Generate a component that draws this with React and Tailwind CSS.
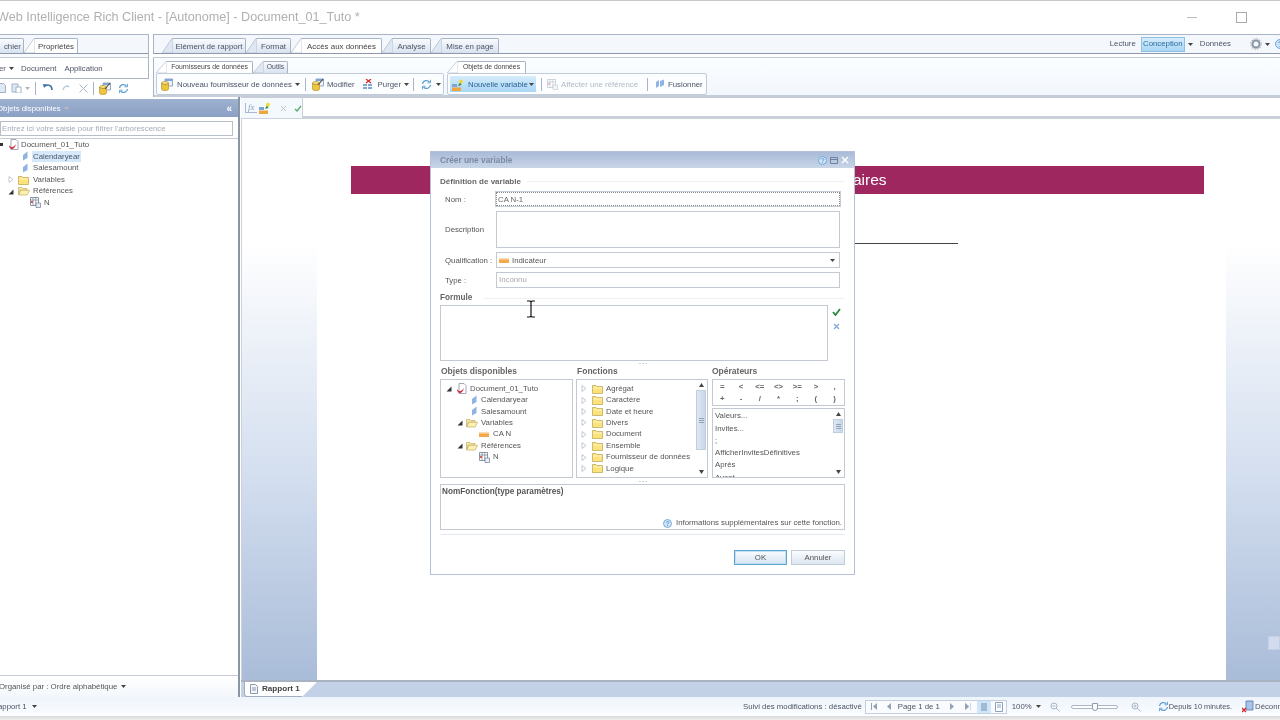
import React from 'react';

const Caret = ({ className = '' }) => (
  <svg width="5" height="3" viewBox="0 0 5 3" className={`shrink-0 ${className}`}><path d="M0 0H5L2.5 3z" fill="#444" /></svg>
);

const Sep = ({ className = '' }) => <span className={`w-px h-[13px] bg-[#a9b4c4] shrink-0 ${className}`} />;

const FolderClosed = ({ className = '' }) => (
  <svg width="11" height="10" viewBox="0 0 11 10" className={`shrink-0 ${className}`}>
    <path d="M.5 1.500h3.500l1 1h5.500v7h-10z" fill="#fbe27a" stroke="#b9a24e" strokeWidth=".7" />
    <path d="M1 3.500h9v1H1z" fill="#fff6c4" />
  </svg>
);

const FolderOpen = ({ className = '' }) => (
  <svg width="12" height="10" viewBox="0 0 12 10" className={`shrink-0 ${className}`}>
    <path d="M.5 1.500h3.500l1 1h4v2h-7l-1.500 4z" fill="#f3e3a6" stroke="#b9a24e" strokeWidth=".6" />
    <path d="M.8 9l2-4.800h8.700l-2.300 4.800z" fill="#fdf0b5" stroke="#b9a24e" strokeWidth=".6" />
  </svg>
);

const Leaf = ({ className = '' }) => (
  <svg width="6" height="10" viewBox="0 0 6 10" className={`shrink-0 ${className}`}><path d="M1 9.500V4L5.500.5v6.500z" fill="#8fb4e4" /></svg>
);

const Measure = ({ className = '' }) => (
  <svg width="10" height="5" viewBox="0 0 10 5" className={`shrink-0 ${className}`}>
    <path d="M0 1.500h10V5H0z" fill="#f4a94a" />
    <path d="M1 0v2M3 0v2M5 0v2M7 0v2M9 0v2" stroke="#f4a94a" strokeWidth=".8" />
  </svg>
);

const DocIcon = ({ className = '' }) => (
  <svg width="11" height="11" viewBox="0 0 11 11" className={`shrink-0 ${className}`}>
    <path d="M3 .5h5l2 2v8H3z" fill="#fff" stroke="#8d93a8" strokeWidth=".8" />
    <path d="M1 6c2 3 4 3 7-1-1 4-3 5-4 5-2 0-3-2-3-4z" fill="#cf2b3f" />
  </svg>
);

const RefIcon = ({ className = '', faded }) => (
  <svg width="11" height="11" viewBox="0 0 11 11" className={`shrink-0 ${className} ${faded ? 'opacity-40' : ''}`}>
    <path d="M.5.500h8v8h-8z" fill="#fff" stroke="#5c6b86" strokeWidth=".7" />
    <path d="M.5 3h8M3 .5v8M5.800.5v8" stroke="#5c6b86" strokeWidth=".6" />
    <path d="M1 4h2v2H1z" fill="#d65a5a" />
    <path d="M6 6h4.500v4.500H6z" fill="#e8edf5" stroke="#5c6b86" strokeWidth=".6" />
  </svg>
);

const Triangle = ({ open, className = '' }) => (
  <svg width="6" height="7" viewBox="0 0 6 7" className={`shrink-0 ${className}`}>
    {open ? <path d="M5.500 1.500v5h-5z" fill="#333" /> : <path d="M1 .5l4 3-4 3z" fill="#fff" stroke="#aab2bf" strokeWidth=".7" />}
  </svg>
);

// yellow cylinder with a small window, pencil stroke for the "edit" variant
const Cube = ({ className = '', edit }) => (
  <svg width="12" height="13" viewBox="0 0 12 13" className={`shrink-0 ${className}`}>
    <path d="M4 1h7.500v7H4z" fill="#eef3fa" stroke="#6f86a8" strokeWidth=".7" />
    <path d="M4 1h7.500v2H4z" fill="#7ea6d8" />
    <ellipse cx="4" cy="5" rx="3.500" ry="1.500" fill="#f8e27a" stroke="#a98a25" strokeWidth=".6" />
    <path d="M.5 5v6c0 2 7 2 7 0V5c0 2-7 2-7 0z" fill="#eec53c" stroke="#a98a25" strokeWidth=".6" />
    {edit && <path d="M6 7l5-6" stroke="#5a4a30" strokeWidth="1.100" />}
  </svg>
);

const Cycle = ({ className = '' }) => (
  <svg width="11" height="11" viewBox="0 0 11 11" className={`shrink-0 ${className}`} fill="none" stroke="#5f9fd0" strokeWidth="1.300">
    <path d="M1.500 5a4 4 0 0 1 7-2M9.500 6a4 4 0 0 1-7 2" />
    <path d="M9.500 .8v3h-3M1.500 10.200v-3h3" strokeWidth=".9" />
  </svg>
);

const NewVar = ({ className = '' }) => (
  <svg width="12" height="12" viewBox="0 0 12 12" className={`shrink-0 ${className}`}>
    <path d="M0 8.500h9V12H0z" fill="#eda53d" />
    <path d="M0 5h5v3H0z" fill="#7fa4cf" />
    <path d="M6 7l2-4 1.500 3z" fill="#2f8f3c" />
    <path d="M9 0l.8 1.600 1.700.2-1.200 1.200.3 1.700L9 3.900l-1.600.8.300-1.700-1.200-1.200 1.700-.2z" fill="#f6d728" />
  </svg>
);

const Help = ({ className = '' }) => (
  <svg width="9" height="9" viewBox="0 0 9 9" className={`shrink-0 ${className}`}>
    <circle cx="4.500" cy="4.500" r="4" fill="#cfe4f7" stroke="#5b9bd5" strokeWidth=".8" />
    <path d="M3.200 3.500c.3-1.300 2.600-1.200 2.600.1 0 .9-1.300.9-1.300 1.800M4.500 6.300v.8" stroke="#3c7fc0" strokeWidth=".8" fill="none" />
  </svg>
);

const Tab = ({ label, active, small, bodyClass = '' }) => (
  <div className={`flex items-stretch shrink-0 ${small ? 'h-[12px]' : 'h-[15px]'}`}>
    <svg width="11" height="100%" viewBox="0 0 11 16" preserveAspectRatio="none" className="shrink-0">
      <path d="M0 16L10 .5h1V16z" fill={active ? '#ffffff' : '#dfe7f3'} stroke="#a8b4c6" strokeWidth=".7" />
    </svg>
    <div className={`border-t border-r border-[#a8b4c6] rounded-tr-[2px] flex items-center justify-center whitespace-nowrap ${active ? 'bg-white text-[#444]' : 'bg-gradient-to-b from-[#f9fbfe] to-[#d8e2f0] text-[#4c5564]'} ${small ? 'text-[6.800px]' : 'text-[7.900px] pt-[1px]'} ${bodyClass}`}>
      <span>{label}</span>
    </div>
  </div>
);

const Row = ({ children, className = '' }) => <div className={`h-[11.4px] flex items-center whitespace-nowrap ${className}`}>{children}</div>;

const ScrollBar = ({ className = '', thumbClass = '' }) => (
  <div className={`w-[12px] flex flex-col items-center shrink-0 ${className}`}>
    <svg width="5" height="4" viewBox="0 0 5 4" className="mt-[3px]"><path d="M0 4h5L2.500 0z" fill="#444" /></svg>
    <div className={`w-[10px] mt-[3px] bg-gradient-to-r from-[#dfe8f4] to-[#c9d7ea] border border-[#c0cddf] flex items-center justify-center ${thumbClass}`}>
      <span className="w-[5px] h-[5px] border-y border-[#95a3b8] [background:linear-gradient(transparent_40%,#95a3b8_40%,#95a3b8_60%,transparent_60%)]" />
    </div>
    <svg width="5" height="4" viewBox="0 0 5 4" className="mt-auto mb-[3px]"><path d="M0 0h5L2.500 4z" fill="#444" /></svg>
  </div>
);

const functions = ['Agrégat', 'Caractère', 'Date et heure', 'Divers', 'Document', 'Ensemble', 'Fournisseur de données', 'Logique'];
const operators = ['=', '<', '<=', '<>', '>=', '>', ',', '+', '-', '/', '*', ';', '(', ')'];

function Dialog() {
  return (
    <div className="absolute left-[430px] top-[151px] w-[425px] h-[424px] border border-[#b4c1d6] bg-white flex flex-col text-[7.800px] text-[#555]">
      <div className="h-[16px] shrink-0 bg-gradient-to-b from-[#a9bbd8] to-[#c9d5e7] flex items-center pl-[9px] pr-[5px]">
        <span className="font-bold text-[8.300px] text-[#7c8ba1]">Créer une variable</span>
        <Help className="ml-auto" />
        <svg width="8" height="7" viewBox="0 0 8 7" className="ml-[3px]"><path d="M.5.500h7v6h-7zM.5 2.500h7" fill="none" stroke="#6f80a0" /></svg>
        <svg width="8" height="8" viewBox="0 0 8 8" className="ml-[3px]"><path d="M1 1l6 6M7 1L1 7" stroke="#fff" strokeWidth="1.400" /></svg>
      </div>
      <div className="px-[9px] flex flex-col">
        <div className="mt-[8px] h-[10px] flex items-center pt-[1px] text-[#666]">
          <span className="font-bold text-[8px]">Définition de variable</span>
          <span className="flex-1 h-px bg-[#eef1f5] ml-[6px]" />
        </div>
        <div className="mt-[6px] h-[14px] flex items-center">
          <span className="w-[56px] pl-[5px] pt-[1px] shrink-0 whitespace-nowrap">Nom :</span>
          <div className="w-[344px] h-full border border-dotted border-[#888] outline outline-1 outline-[#c5ccd6] flex items-center pl-[1px] pt-[1px] text-[#666]">CA N-1</div>
        </div>
        <div className="mt-[5px] h-[37px] flex items-center">
          <span className="w-[56px] pl-[5px] pt-[1px] shrink-0 whitespace-nowrap">Description</span>
          <div className="w-[344px] h-full border border-[#c2c9d3]" />
        </div>
        <div className="mt-[4px] h-[16px] flex items-center">
          <span className="w-[56px] pl-[5px] pt-[1px] shrink-0 whitespace-nowrap">Qualification :</span>
          <div className="w-[344px] h-full border border-[#c2c9d3] flex items-center pl-[2px] pr-[4px]">
            <Measure />
            <span className="ml-[3px] pt-[1px]">Indicateur</span>
            <Caret className="ml-auto" />
          </div>
        </div>
        <div className="mt-[4px] h-[16px] flex items-center">
          <span className="w-[56px] pl-[5px] pt-[1px] shrink-0 whitespace-nowrap">Type :</span>
          <div className="w-[344px] h-full border border-[#c2c9d3] flex items-center pl-[2px] text-[#aaa]">Inconnu</div>
        </div>
        <div className="mt-[5px] h-[10px] flex items-center pt-[1px] text-[#666]">
          <span className="font-bold text-[8.200px]">Formule</span>
          <span className="flex-1 h-px bg-[#eef1f5] ml-[11px]" />
        </div>
        <div className="mt-[2px] h-[56px] flex">
          <div className="w-[388px] border border-[#c2c9d3]" />
          <div className="ml-[3px] flex flex-col items-center w-[10px]">
            <svg width="9" height="8" viewBox="0 0 9 8" className="mt-[3px]"><path d="M1 4l2.500 3L8 1" fill="none" stroke="#2b8a3a" strokeWidth="1.800" /></svg>
            <svg width="7" height="7" viewBox="0 0 7 7" className="mt-[7px]"><path d="M1 1l5 5M6 1L1 6" stroke="#7fa8d6" strokeWidth="1.200" /></svg>
          </div>
        </div>
        <div className="h-[5px] flex justify-center items-center gap-[1px] w-[405px]">
          <span className="w-[2px] h-px bg-[#ccd3dd]" /><span className="w-[2px] h-px bg-[#ccd3dd]" /><span className="w-[2px] h-px bg-[#ccd3dd]" />
        </div>
        <div className="h-[10px] flex items-center font-bold text-[8.500px] text-[#666]">
          <span className="w-[136px] pl-[1px]">Objets disponibles</span>
          <span className="w-[136px] pl-[1px]">Fonctions</span>
          <span>Opérateurs</span>
        </div>
        <div className="mt-[3px] h-[99px] flex">
          <div className="w-[133px] border border-[#c2c9d3] pt-[3px] pl-[5px]">
            <Row><Triangle open /><DocIcon className="ml-[4px]" /><span className="ml-[3px]">Document_01_Tuto</span></Row>
            <Row><Leaf className="ml-[25px]" /><span className="ml-[4px]">Calendaryear</span></Row>
            <Row><Leaf className="ml-[25px]" /><span className="ml-[4px]">Salesamount</span></Row>
            <Row><Triangle open className="ml-[11px]" /><FolderOpen className="ml-[3px]" /><span className="ml-[3px]">Variables</span></Row>
            <Row><Measure className="ml-[33px]" /><span className="ml-[4px]">CA N</span></Row>
            <Row><Triangle open className="ml-[11px]" /><FolderOpen className="ml-[3px]" /><span className="ml-[3px]">Références</span></Row>
            <Row><RefIcon className="ml-[33px]" /><span className="ml-[3px]">N</span></Row>
          </div>
          <div className="w-[132px] ml-[3px] border border-[#c2c9d3] flex">
            <div className="flex-1 pt-[3px] pl-[4px]">
              {functions.map((name) => (
                <Row key={name}><Triangle /><FolderClosed className="ml-[5px]" /><span className="ml-[3px]">{name}</span></Row>
              ))}
            </div>
            <ScrollBar thumbClass="h-[60px]" />
          </div>
          <div className="w-[133px] ml-[4px] flex flex-col">
            <div className="h-[27px] border border-[#c2c9d3] grid grid-cols-7 items-center justify-items-center py-[1px] font-bold text-[#666]">
              {operators.map((op) => <span key={op}>{op}</span>)}
            </div>
            <div className="mt-[2px] flex-1 min-h-0 border border-[#c2c9d3] flex overflow-hidden">
              <div className="flex-1 pl-[2px] pt-[1px] overflow-hidden">
                {['Valeurs...', 'Invites...', ';', 'AfficherInvitesDéfinitives', 'Après', 'Avant'].map((v) => (
                  <div key={v} className="h-[12.3px] flex items-center whitespace-nowrap">{v}</div>
                ))}
              </div>
              <ScrollBar thumbClass="h-[14px]" />
            </div>
          </div>
        </div>
        <div className="h-[6px] flex justify-center items-center gap-[1px] w-[405px]">
          <span className="w-[2px] h-px bg-[#ccd3dd]" /><span className="w-[2px] h-px bg-[#ccd3dd]" /><span className="w-[2px] h-px bg-[#ccd3dd]" />
        </div>
        <div className="h-[46px] border border-[#c2c9d3] flex flex-col px-[1px]">
          <span className="font-bold text-[8.200px] text-[#555] mt-[1px]">NomFonction(type paramètres)</span>
          <div className="mt-auto flex items-center justify-end pr-[1px]">
            <Help />
            <span className="ml-[4px]">Informations supplémentaires sur cette fonction.</span>
          </div>
        </div>
        <div className="mt-[4px] h-px bg-[#e6eaf0]" />
        <div className="mt-[15px] h-[15px] flex justify-end gap-[4px]">
          <button className="w-[53px] border border-[#5fa3cf] bg-gradient-to-b from-[#fafcff] to-[#d4e4f4] text-[#555] shadow-[inset_0_0_0_1px_#bfe0f5]">OK</button>
          <button className="w-[54px] border border-[#c2ccd9] bg-gradient-to-b from-[#fafcff] to-[#dde6f1] text-[#555]">Annuler</button>
        </div>
      </div>
    </div>
  );
}

function Ribbon() {
  return (
    <div className="h-[63px] shrink-0 flex gap-[4px]">
      <div className="w-[149px] shrink-0 flex flex-col overflow-hidden">
        <div className="h-[45px] border-t border-b border-r border-[#a9b4c5] bg-[#f7fafe] flex flex-col">
          <div className="h-[19px] border-b border-[#8d99ab] flex items-end -ml-[2px] shrink-0 bg-[#f4f8fd]">
            <div className="h-[15px] w-[26px] border-t border-r border-[#a8b4c6] bg-gradient-to-b from-[#f9fbfe] to-[#d8e2f0] rounded-tr-[2px] flex items-center justify-end pr-[2px] pt-[1px] text-[7.900px] text-[#4c5564]">chier</div>
            <Tab label="Propriétés" active bodyClass="w-[43px]" />
          </div>
          <div className="flex-1 mt-[3px] border-t border-[#c2cad6] bg-white flex items-center pt-[1px] text-[7.800px] text-[#4c5564] -ml-[1px]">
            <span>er</span>
            <Caret className="ml-[3px]" />
            <span className="ml-[7px]">Document</span>
            <span className="ml-[8px]">Application</span>
          </div>
        </div>
        <div className="flex-1 flex items-center pl-[2px]">
          <svg width="8" height="10" viewBox="0 0 8 10" className="-ml-[4px]"><path d="M.5.500h5l2 2v7h-7z" fill="#dfe8f4" stroke="#9fb0c6" /></svg>
          <svg width="11" height="10" viewBox="0 0 11 10" className="ml-[5px]"><path d="M1 1h6v8H1z" fill="#dfe8f4" stroke="#a2b2c8" /><path d="M5 4h5v6H5z" fill="#fff" stroke="#a2b2c8" /></svg>
          <Caret className="ml-[3px] opacity-40" />
          <Sep className="ml-[5px]" />
          <svg width="10" height="8" viewBox="0 0 10 8" className="ml-[7px]" fill="none"><path d="M2 2c3-2 7-1 7 4" stroke="#3f6fa8" strokeWidth="1.600" /><path d="M0 0l4 .5L1 4z" fill="#3f6fa8" /></svg>
          <svg width="9" height="7" viewBox="0 0 9 7" className="ml-[9px]" fill="none"><path d="M7 2C5 0 2 1 1 5" stroke="#b5c4d8" strokeWidth="1.300" /></svg>
          <svg width="9" height="9" viewBox="0 0 9 9" className="ml-[8px]"><path d="M.5.500l8 8M8.500.5l-8 8" stroke="#a9b6c7" /></svg>
          <Sep className="ml-[5px]" />
          <Cube edit className="ml-[5px]" />
          <Cycle className="ml-[7px]" />
        </div>
      </div>
      <div className="flex-1 flex flex-col min-w-0">
        <div className="h-[20px] shrink-0 border-t border-b border-l border-t-[#a9b4c5] border-b-[#8d99ab] border-l-[#a9b4c5] bg-[#f4f8fd] flex items-end pl-[8px]">
          <Tab label="Elément de rapport" bodyClass="w-[73px]" />
          <Tab label="Format" bodyClass="w-[34px]" />
          <Tab label="Accès aux données" active bodyClass="w-[80px]" />
          <Tab label="Analyse" bodyClass="w-[38px]" />
          <Tab label="Mise en page" bodyClass="w-[57px]" />
          <div className="ml-auto self-stretch flex items-center text-[7.800px] text-[#4c5564] overflow-hidden whitespace-nowrap">
            <span>Lecture</span>
            <span className="ml-[5px] w-[44px] h-[15px] flex items-center justify-center border border-[#8fbfe2] bg-gradient-to-b from-[#d5ecfb] to-[#a9d6f5] text-[#2c6aa0]">Conception</span>
            <Caret className="ml-[3px]" />
            <span className="ml-[7px]">Données</span>
            <svg width="12" height="12" viewBox="0 0 12 12" className="ml-[19px] shrink-0" fill="none"><circle cx="6" cy="6" r="3.500" stroke="#8a94a3" strokeWidth="2" /><circle cx="6" cy="6" r="5.200" stroke="#aab3c0" strokeWidth="1.200" strokeDasharray="1.500 1.200" /></svg>
            <Caret className="ml-[3px]" />
            <span className="ml-[5px] w-[5px] overflow-hidden shrink-0"><Help className="w-[10px] h-[10px]" /></span>
          </div>
        </div>
        <div className="flex-1 min-h-0 bg-gradient-to-b from-[#fbfdff] to-[#f2f7fd] border-l border-[#a9b4c5] flex flex-col mt-[3px] border-t border-t-[#c2cad6]">
          <div className="flex pl-[2px] pt-[3px] flex-1">
            <div className="flex flex-col w-[288px] shrink-0">
              <div className="flex items-end h-[12px] shrink-0">
                <Tab small active label="Fournisseurs de données" bodyClass="w-[86px]" />
                <Tab small label="Outils" bodyClass="w-[24px]" />
              </div>
              <div className="h-[22px] border border-[#c2ccd9] rounded-[2px] bg-[#fbfdff] flex items-center pl-[4px] pt-[1px] text-[7.800px] text-[#4c5564] whitespace-nowrap">
                <Cube />
                <span className="ml-[4px]">Nouveau fournisseur de données</span>
                <Caret className="ml-[3px]" />
                <Sep className="ml-[5px]" />
                <Cube edit className="ml-[6px]" />
                <span className="ml-[3px]">Modifier</span>
                <svg width="10" height="11" viewBox="0 0 10 11" className="ml-[8px] shrink-0"><path d="M0 5h4v2H0zM5 5h4v2H5zM0 8h4v2H0zM5 8h4v2H5z" fill="#7fa8d6" /><path d="M3 0l5 4M8 0L3 4" stroke="#d22" strokeWidth="1.200" /></svg>
                <span className="ml-[5px]">Purger</span>
                <Caret className="ml-[3px]" />
                <Sep className="ml-[4px]" />
                <Cycle className="ml-[7px]" />
                <Caret className="ml-[4px]" />
              </div>
            </div>
            <div className="flex flex-col w-[260px] shrink-0 ml-[3px]">
              <div className="flex items-end h-[12px] shrink-0">
                <Tab small active label="Objets de données" bodyClass="w-[68px]" />
              </div>
              <div className="h-[22px] border border-[#c2ccd9] rounded-[2px] bg-[#fbfdff] flex items-center pl-[2px] text-[7.800px] text-[#4c5564] whitespace-nowrap">
                <div className="w-[86px] h-[16px] flex items-center pl-[2px] pt-[1px] bg-gradient-to-b from-[#d5ecfb] to-[#a9d6f5] shrink-0">
                  <NewVar />
                  <span className="ml-[4px] text-[#2c5f90]">Nouvelle variable</span>
                  <Caret className="ml-auto mr-[2px]" />
                </div>
                <Sep className="ml-[5px]" />
                <RefIcon faded className="ml-[5px]" />
                <span className="ml-[3px] pt-[1px] text-[#b3bac5]">Affecter une référence</span>
                <Sep className="ml-[9px]" />
                <svg width="10" height="10" viewBox="0 0 10 10" className="ml-[7px] shrink-0"><path d="M1 9V3l3-2v6zM5 8V2l4-1.500V6z" fill="#8fb4e4" /></svg>
                <span className="ml-[3px] pt-[1px]">Fusionner</span>
              </div>
            </div>
          </div>
          <div className="h-[2px] bg-[#c5cdd8] shrink-0" />
        </div>
      </div>
    </div>
  );
}

const sidebarRows = [
  <><svg width="3" height="3" className="shrink-0"><path d="M0 0h3v3H0z" fill="#333" /></svg><DocIcon className="ml-[5px]" /><span className="ml-[2px]">Document_01_Tuto</span></>,
  <><Leaf className="ml-[22px]" /><span className="ml-[4px] bg-[#d7e8f8] px-[1px] text-[#46566e]">Calendaryear</span></>,
  <><Leaf className="ml-[22px]" /><span className="ml-[5px]">Salesamount</span></>,
  <><Triangle className="ml-[8px]" /><FolderClosed className="ml-[4px]" /><span className="ml-[4px]">Variables</span></>,
  <><Triangle open className="ml-[8px]" /><FolderOpen className="ml-[4px]" /><span className="ml-[3px]">Références</span></>,
  <><RefIcon className="ml-[30px]" /><span className="ml-[3px]">N</span></>,
];

function Sidebar() {
  return (
    <aside className="w-[240px] shrink-0 border-r-2 border-[#8b95a3] flex flex-col text-[7.800px] text-[#555] overflow-hidden">
      <div className="mt-[2px] h-[18px] shrink-0 bg-gradient-to-b from-[#9db1d0] to-[#8ba1c4] flex items-center pt-[1px] text-white -ml-[3px] pr-[6px]">
        <span>Objets disponibles</span>
        <Caret className="ml-[3px] invert" />
        <span className="ml-auto font-bold text-[10px] leading-none">«</span>
      </div>
      <div className="h-[22px] shrink-0 border-b border-[#c5ccd6] flex items-start pt-[4px] pr-[5px]">
        <div className="flex-1 h-[15px] border border-[#b7bfca] flex items-center pl-[1px] text-[#a5abb5] whitespace-nowrap">Entrez ici votre saisie pour filtrer l'arborescence</div>
      </div>
      <div className="flex-1 min-h-0 border-b border-[#c5ccd6]">
        {sidebarRows.map((row, i) => (
          <div key={i} className="h-[11.600px] flex items-center whitespace-nowrap">{row}</div>
        ))}
      </div>
      <div className="h-[21px] shrink-0 flex items-center -ml-[1px] bg-gradient-to-b from-[#fff] to-[#f3f7fc]">
        <span>Organisé par : Ordre alphabétique</span>
        <Caret className="ml-[4px]" />
      </div>
    </aside>
  );
}

function Workspace() {
  return (
    <main className="flex-1 min-w-0 flex flex-col pl-[1px]">
      <div className="h-[21px] shrink-0 flex border-t border-[#c5ccd6]">
        <div className="w-[61px] shrink-0 bg-[#f4f9fd] flex items-center pl-[4px]">
          <span className="font-['Liberation_Serif',serif] italic text-[9px] text-[#8aa0bd] leading-none border-l border-b border-[#a9b8cc] pl-[2px] w-[12px]">fx</span>
          <NewVar className="ml-[2px]" />
          <svg width="7" height="7" viewBox="0 0 7 7" className="ml-[9px]"><path d="M1 1l5 5M6 1L1 6" stroke="#b9c3d1" /></svg>
          <svg width="8" height="7" viewBox="0 0 8 7" className="ml-[7px]"><path d="M1 4l2 2 4-5" fill="none" stroke="#5aa96a" strokeWidth="1.300" /></svg>
        </div>
        <div className="flex-1 border-l border-b-2 border-[#c9d0da] border-l-[#c9d0da]" />
      </div>
      <div className="flex-1 min-h-0 flex border-l border-t border-[#ccd3dd]">
        <div className="w-[75px] shrink-0 bg-[linear-gradient(#fff_22%,#d3deef_64%,#a9bcd8)]" />
        <div className="w-[909px] shrink-0 bg-white pt-[47px]">
          <div className="ml-[34px] w-[853px] h-[28px] bg-[#9e2760] flex items-center text-white text-[15.500px] pl-[502px]">aires</div>
          <div className="mt-[49px] ml-[283px] w-[358px] h-px bg-[#444]" />
        </div>
        <div className="flex-1 bg-[linear-gradient(#fff_22%,#d3deef_64%,#a9bcd8)] flex flex-col items-end justify-end pb-[30px] overflow-hidden">
          <div className="w-[12px] h-[14px] bg-[#d2dcee] border border-[#c2cfe4]" />
        </div>
      </div>
      <div className="h-[17px] shrink-0 border-t-2 border-[#a8b2c0] bg-[#c3d1e6] flex items-end pl-[3px]">
        <div className="flex items-stretch h-[15px] text-[8.100px] font-bold text-[#444]">
          <div className="w-[58px] bg-white rounded-bl-[3px] border-l border-b border-[#a3afc0] flex items-center pl-[5px]">
            <svg width="8" height="10" viewBox="0 0 8 10"><path d="M.5.500h5l2 2v7h-7z" fill="#f3f6fa" stroke="#8d99ab" /><path d="M2 4h4M2 6h4" stroke="#8d99ab" /></svg>
            <span className="ml-[4px] whitespace-nowrap">Rapport 1</span>
          </div>
          <svg width="15" height="15" viewBox="0 0 15 15"><path d="M0 15V0h15z" fill="#fff" /></svg>
        </div>
      </div>
    </main>
  );
}

function StatusBar() {
  return (
    <footer className="h-[19px] shrink-0 bg-gradient-to-b from-[#eef4fb] to-[#fbfdff] flex items-center text-[7.800px] text-[#4c5564] whitespace-nowrap overflow-hidden">
      <span className="-ml-[2px]">apport 1</span>
      <Caret className="ml-[5px]" />
      <span className="ml-auto">Suivi des modifications : désactivé</span>
      <div className="ml-[3px] w-[142px] h-[14px] shrink-0 border border-[#c5d0df] bg-[#f9fbfe] flex items-center">
        <svg width="6" height="7" viewBox="0 0 6 7" className="ml-[5px]"><path d="M.5 0v7" stroke="#93a1b5" /><path d="M6 0v7L2 3.500z" fill="#93a1b5" /></svg>
        <svg width="4" height="7" viewBox="0 0 4 7" className="ml-[10px]"><path d="M4 0v7L0 3.500z" fill="#93a1b5" /></svg>
        <span className="ml-[7px]">Page 1 de 1</span>
        <svg width="4" height="7" viewBox="0 0 4 7" className="ml-[10px]"><path d="M0 0v7l4-3.500z" fill="#93a1b5" /></svg>
        <svg width="6" height="7" viewBox="0 0 6 7" className="ml-[11px]"><path d="M0 0v7l4-3.500zM5.500 0v7" fill="#93a1b5" stroke="#93a1b5" strokeWidth=".4" /></svg>
        <span className="ml-[6px] w-[14px] h-full bg-[#cfe6f8] flex items-center justify-center shrink-0">
          <svg width="8" height="8" viewBox="0 0 8 8"><path d="M1 1h6M1 3h6M1 5h6M1 7h6" stroke="#6e8db3" /></svg>
        </span>
        <svg width="8" height="10" viewBox="0 0 8 10" className="ml-[4px]"><path d="M.5.500h7v9h-7z" fill="#fff" stroke="#8aa2c0" /><path d="M2 3h4M2 5h4" stroke="#8aa2c0" /></svg>
      </div>
      <span className="ml-[5px]">100%</span>
      <Caret className="ml-[4px]" />
      <svg width="10" height="10" viewBox="0 0 10 10" className="ml-[9px] shrink-0" fill="none" stroke="#a9b6c7"><circle cx="4" cy="4" r="3" /><path d="M6 6l3.500 3.500M2.500 4h3" /></svg>
      <div className="ml-[11px] w-[47px] h-[4px] border border-[#a9b6c7] rounded-full bg-white relative shrink-0">
        <span className="absolute left-[20px] -top-[3px] w-[6px] h-[8px] bg-white border border-[#8b9bb1] rounded-b-[3px]" />
      </div>
      <svg width="10" height="10" viewBox="0 0 10 10" className="ml-[13px] shrink-0" fill="none" stroke="#a9b6c7"><circle cx="4" cy="4" r="3" /><path d="M6 6l3.500 3.500M2.500 4h3M4 2.500v3" /></svg>
      <Cycle className="ml-[17px]" />
      <span className="text-[7.400px]">Depuis 10 minutes.</span>
      <svg width="12" height="13" viewBox="0 0 12 13" className="ml-[10px] shrink-0"><path d="M4 1h7v9H4z" fill="#a9c4e8" stroke="#4f76ad" strokeWidth=".8" /><path d="M0 8l4 4M4 8l-4 4" stroke="#d22" strokeWidth="1.300" /></svg>
      <span className="ml-[1px] w-[25px] overflow-hidden shrink-0">Déconnexion</span>
    </footer>
  );
}

export default function App() {
  return (
    <div className="relative w-[1280px] h-[720px] overflow-hidden bg-white flex flex-col font-['Liberation_Sans',Arial,sans-serif] blur-[0.4px]">
      <div className="h-[34px] shrink-0 border-t border-[#c8c8c8] flex items-center pr-[33px]">
        <span className="text-[12.600px] text-[#b0b0b0] -ml-[3px] whitespace-nowrap">Web Intelligence Rich Client - [Autonome] - Document_01_Tuto *</span>
        <span className="ml-auto w-[10px] h-px bg-[#bbb]" />
        <span className="ml-[39px] w-[11px] h-[11px] border border-[#aaa]" />
      </div>
      <Ribbon />
      <div className="flex-1 min-h-0 flex">
        <Sidebar />
        <Workspace />
      </div>
      <StatusBar />
      <div className="h-[4px] shrink-0 bg-gradient-to-b from-[#d8d8d8] to-[#efefef]" />
      <Dialog />
      <svg width="12" height="18" viewBox="0 0 12 18" className="absolute left-[525px] top-[300px]">
        <path d="M2 1h3l1 1 1-1h3M6 2v14M2 17h3l1-1 1 1h3" fill="none" stroke="#111" strokeWidth="1.200" />
      </svg>
    </div>
  );
}
